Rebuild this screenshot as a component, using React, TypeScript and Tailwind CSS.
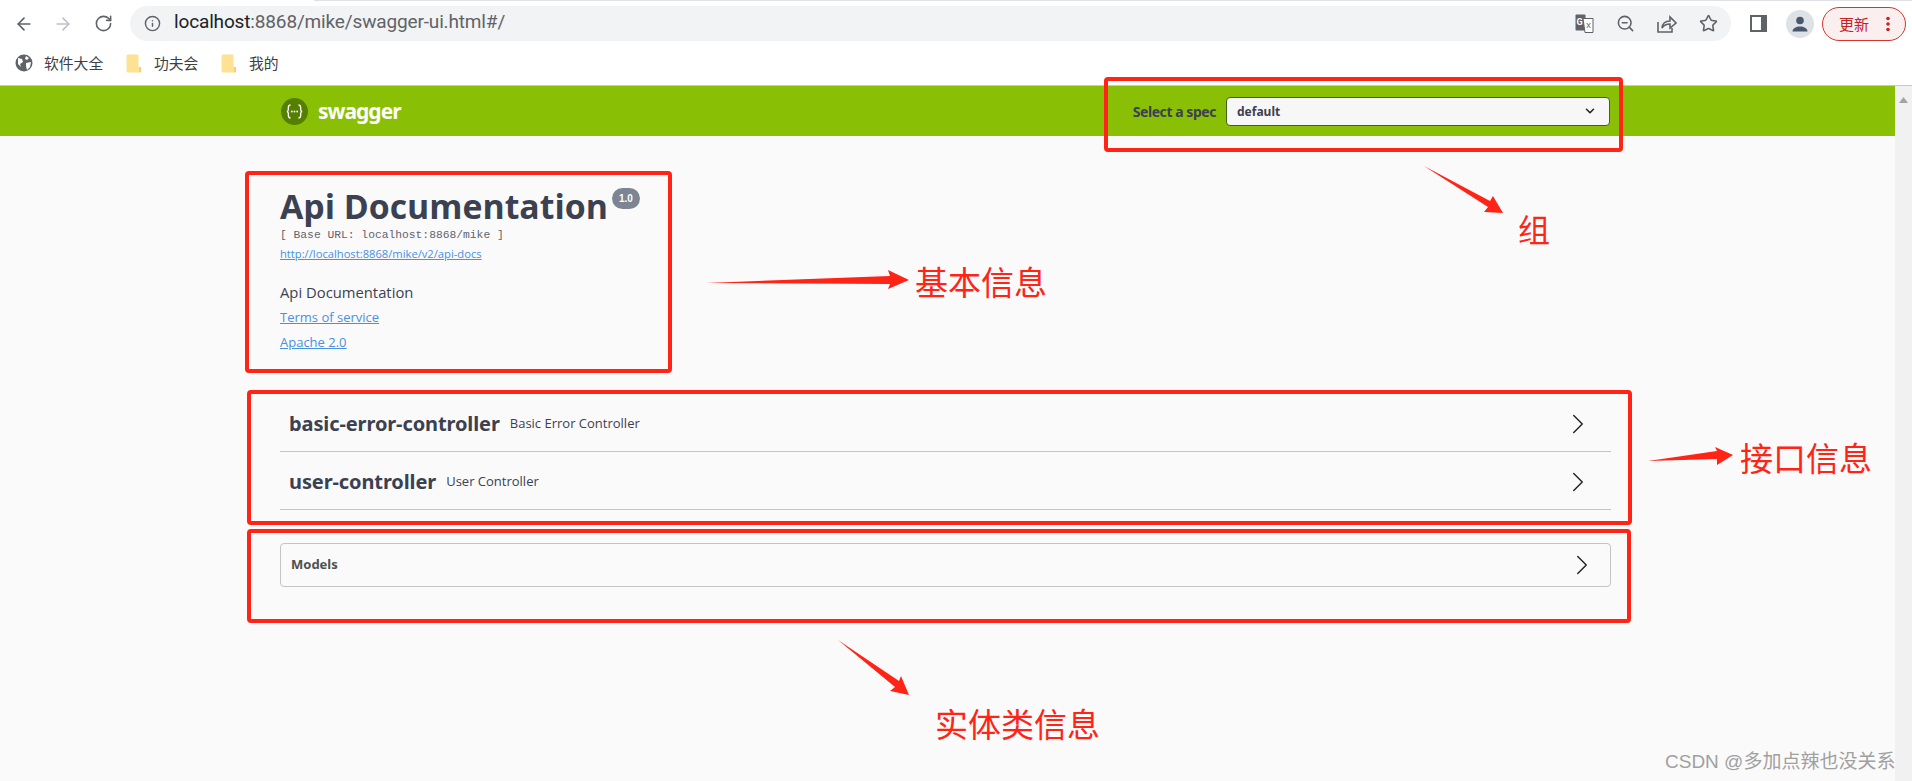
import React from "react";
import { ArrowLeft, ArrowRight, RotateCw, Info, ZoomOut, Star, ChevronRight, ChevronDown } from "lucide-react";

const cjk = "font-['Noto_Sans_CJK_SC','Noto_Sans',sans-serif]";
const open = "font-['Open_Sans',sans-serif]";

function Folder() {
  return (
    <svg width="16" height="19" viewBox="0 0 16 19" className="shrink-0">
      <path d="M2 0.5h9.5a1 1 0 0 1 1 1V18.5H2a1.5 1.5 0 0 1-1.5-1.5V2A1.5 1.5 0 0 1 2 .5z" fill="#fde293" />
      <path d="M12.5 13h2.5v4.5a1 1 0 0 1-1 1h-1.5z" fill="#f9d06c" />
    </svg>
  );
}

function Toolbar() {
  return (
    <div className="h-[42px] flex items-center pt-[5px] pl-[13px] pr-[6px]">
      <ArrowLeft size={20} strokeWidth={2} className="text-[#5f6368] ml-[1px]" />
      <ArrowRight size={20} strokeWidth={2} className="text-[#bdc1c6] ml-[19px]" />
      <RotateCw size={19} strokeWidth={2} className="text-[#5f6368] ml-[21px]" />
      <div className="ml-[17px] w-[1601px] h-[35px] rounded-full bg-[#f1f3f4] flex items-center pl-[14px] pr-[13px]">
        <Info size={17} strokeWidth={2} className="text-[#5f6368]" />
        <span className="ml-[13px] mt-[-2px] text-[19px] tracking-[-0.15px] font-['Roboto',sans-serif] text-[#5f6368] whitespace-nowrap">
          <span className="text-[#202124]">localhost</span>:8868/mike/swagger-ui.html#/
        </span>
        <div className="ml-auto flex items-center gap-[22px] text-[#5f6368]">
          <svg width="19" height="19" viewBox="0 0 19 19">
            <rect x="0.5" y="0.5" width="10" height="16" rx="1" fill="#5f6368" />
            <text x="1.6" y="11" fontSize="9" fontWeight="700" fill="#fff" fontFamily="Roboto">G</text>
            <path d="M8 4.5h10v14H10z" fill="#fff" stroke="#5f6368" strokeWidth="1" />
            <text x="11" y="14" fontSize="8" fill="#5f6368" fontFamily="Roboto">X</text>
          </svg>
          <ZoomOut size={19} strokeWidth={2} />
          <svg width="20" height="19" viewBox="0 0 20 19" fill="none" stroke="#5f6368" strokeWidth="1.6">
            <path d="M1 8v10h14v-4" />
            <path d="M5 14c.5-4.5 3.5-7 8-7V3l6 6-6 5v-4c-3.500 0-6 1-8 4z" />
          </svg>
          <Star size={19} strokeWidth={2} />
        </div>
      </div>
      <svg width="17" height="17" viewBox="0 0 17 17" className="ml-[19px]">
        <path d="M0 0h17v17H0z M2 2v13h9V2z" fill="#5f6368" fillRule="evenodd" />
      </svg>
      <div className="ml-[19px] w-[28px] h-[28px] rounded-full bg-[#dee1e6] flex flex-col items-center justify-center">
        <svg width="16" height="16" viewBox="0 0 16 16">
          <circle cx="8" cy="4.500" r="3.800" fill="#48566e" />
          <path d="M0.500 15.500c0-3.500 4-5 7.500-5s7.500 1.500 7.500 5z" fill="#48566e" />
        </svg>
      </div>
      <div className="ml-[8px] w-[84px] h-[34px] rounded-full border border-[#d0362e] bg-[#fbeeee] flex items-center pl-[16px]">
        <span className={`${cjk} text-[15px] leading-none text-[#c5221f]`}>更新</span>
        <svg width="4" height="16" viewBox="0 0 4 16" className="ml-[17px]">
          <circle cx="2" cy="2.500" r="1.800" fill="#c5221f" />
          <circle cx="2" cy="8" r="1.800" fill="#c5221f" />
          <circle cx="2" cy="13.500" r="1.800" fill="#c5221f" />
        </svg>
      </div>
    </div>
  );
}

function Bookmarks() {
  return (
    <div className={`h-[44px] flex items-center pl-[15px] pb-[1px] border-b border-[#c8c8c8] text-[14.800px] text-[#3c4043] ${cjk}`}>
      <svg width="18" height="18" viewBox="0 0 18 18">
        <circle cx="9" cy="9" r="8.500" fill="#5f6368" />
        <path d="M3 4l4 1 1 3-3 2 1 3-3-3zM11 2l3 2-2 2-2-1zM11 9l5-1-1 5-3 3-1-4z" fill="#fff" />
      </svg>
      <span className="ml-[11px] w-[60px] whitespace-nowrap">软件大全</span>
      <div className="ml-[22px]"><Folder /></div>
      <span className="ml-[12px] w-[45px] whitespace-nowrap">功夫会</span>
      <div className="ml-[22px]"><Folder /></div>
      <span className="ml-[12px]">我的</span>
    </div>
  );
}

function SwaggerBar() {
  return (
    <div className="h-[50px] bg-[#89bf04] flex items-center pl-[281px] pr-[285px]">
      <svg width="27" height="27" viewBox="0 0 27 27">
        <circle cx="13.500" cy="13.500" r="13.500" fill="#547f00" />
        <g fill="none" stroke="#fff" strokeWidth="1.300">
          <path d="M9.500 7c-2 0-2.200 1-2.200 3v1.500c0 1-.6 2-1.500 2 .9 0 1.500 1 1.500 2V17c0 2 .2 3 2.200 3" />
          <path d="M17.500 7c2 0 2.200 1 2.200 3v1.500c0 1 .6 2 1.500 2-.9 0-1.500 1-1.500 2V17c0 2-.2 3-2.200 3" />
        </g>
        <circle cx="10.800" cy="13.500" r="0.900" fill="#fff" />
        <circle cx="13.500" cy="13.500" r="0.900" fill="#fff" />
        <circle cx="16.200" cy="13.500" r="0.900" fill="#fff" />
      </svg>
      <span className="ml-[10px] text-[21px] leading-none font-bold tracking-[-1px] text-white font-['Noto_Sans',sans-serif]">swagger</span>
      <div className="ml-auto flex items-center">
        <span className="text-[14px] font-bold tracking-[-0.45px] text-[#3b4151] font-['Noto_Sans',sans-serif]">Select a spec</span>
        <div className="ml-[10px] w-[384px] h-[29px] rounded-[4px] border border-[#41640a] bg-[#f7f7f7] flex items-center justify-between pl-[10px] pr-[12px]">
          <span className="mt-[1px] text-[12px] font-bold text-[#3b4151] font-['Noto_Sans',sans-serif]">default</span>
          <ChevronDown size={14} strokeWidth={2.6} className="text-[#222]" />
        </div>
      </div>
    </div>
  );
}

function Info2() {
  return (
    <div className={`pt-[45px] ${open}`}>
      <div className="flex items-start">
        <h1 className="text-[33.800px] leading-[50px] font-bold text-[#3b4151] whitespace-nowrap">Api Documentation</h1>
        <span className="ml-[4px] mt-[7px] w-[28px] h-[21px] rounded-[11px] bg-[#7d8492] text-white text-[10px] font-bold flex items-center justify-center font-['Liberation_Sans',sans-serif]">1.0</span>
      </div>
      <p className="mt-[-3px] text-[11.300px] leading-[14px] font-['Liberation_Mono',monospace] text-[#5f6470] whitespace-pre">[ Base URL: localhost:8868/mike ]</p>
      <a className="block mt-[4px] text-[11.200px] leading-[16px] text-[#4990e2] underline">http://localhost:8868/mike/v2/api-docs</a>
      <p className="mt-[20px] text-[14.800px] leading-[20px] text-[#3b4151]">Api Documentation</p>
      <a className="block mt-[5px] text-[13px] leading-[20px] text-[#4990e2] underline">Terms of service</a>
      <a className="block mt-[5px] text-[13px] leading-[20px] text-[#4990e2] underline">Apache 2.0</a>
    </div>
  );
}

function Tag({ name, desc, h }: { name: string; desc: string; h: string }) {
  return (
    <div className={`${h} border-b border-[#c4c4c4] flex items-center pt-[3px] pl-[9px] pr-[16px]`}>
      <span className="text-[20px] font-bold tracking-[-0.1px] text-[#3b4151] font-['Noto_Sans',sans-serif]">{name}</span>
      <span className={`ml-[10px] text-[13px] text-[#3b4151] ${open}`}>{desc}</span>
      <ChevronRight size={34} strokeWidth={1} className="ml-auto text-[#222]" />
    </div>
  );
}

function Annotations() {
  const boxes = [
    "left-[1104px] top-[77px] w-[519px] h-[75px]",
    "left-[245px] top-[171px] w-[427px] h-[202px]",
    "left-[247px] top-[390px] w-[1385px] h-[135px]",
    "left-[247px] top-[529px] w-[1384px] h-[94px]",
  ];
  return (
    <>
      {boxes.map((b) => (
        <div key={b} className={`absolute ${b} border-[4px] border-[#ff2416] rounded-[4px]`} />
      ))}
      <svg className="absolute left-0 top-0" width="1912" height="781" viewBox="0 0 1912 781" fill="#ff2416">
        <polygon points="1424,166 1490,201 1493,196 1503,213 1484,212 1488,207" />
        <polygon points="706,283 890,276 888,270 909,280 888,289 890,284" />
        <polygon points="1648,461 1717,451 1715,447 1733,455 1717,465 1717,459" />
        <polygon points="838,640 899,681 901,676 909,695 890,691 895,687" />
      </svg>
      <div className={`absolute left-[1518px] top-[205px] text-[32px] leading-[46px] text-[#ff2416] ${cjk}`}>组</div>
      <div className={`absolute left-[915px] top-[258px] text-[33px] leading-[46px] text-[#ff2416] whitespace-nowrap ${cjk}`}>基本信息</div>
      <div className={`absolute left-[1740px] top-[434px] text-[33px] leading-[46px] text-[#ff2416] whitespace-nowrap ${cjk}`}>接口信息</div>
      <div className={`absolute left-[935px] top-[700px] text-[33px] leading-[46px] text-[#ff2416] whitespace-nowrap ${cjk}`}>实体类信息</div>
      <div className="absolute left-[1665px] top-[750px] text-[19px] leading-[24px] text-[#a0a0a0] whitespace-nowrap font-['Liberation_Sans','Noto_Sans_CJK_SC',sans-serif]">CSDN @多加点辣也没关系</div>
    </>
  );
}

export default function App() {
  return (
    <div className="relative w-[1912px] h-[781px] overflow-hidden bg-white flex flex-col">
      <div className="absolute left-[314px] top-0 right-0 h-px bg-[#dee1e6]" />
      <Toolbar />
      <Bookmarks />
      <div className="flex-1 flex min-h-0">
        <div className="flex-1 bg-[#fafafa] min-w-0">
          <SwaggerBar />
          <div className="ml-[280px] w-[1331px]">
            <Info2 />
            <div className="mt-[41px]">
              <Tag name="basic-error-controller" desc="Basic Error Controller" h="h-[59px]" />
              <Tag name="user-controller" desc="User Controller" h="h-[58px]" />
            </div>
            <div className="mt-[33px] h-[44px] rounded-[4px] border border-[#c4c4c4] flex items-center pl-[10px] pr-[11px]">
              <span className="text-[13px] font-bold text-[#505050] font-['Noto_Sans',sans-serif]">Models</span>
              <ChevronRight size={34} strokeWidth={1} className="ml-auto text-[#222]" />
            </div>
          </div>
        </div>
        <div className="w-[17px] bg-[#f1f1f1] flex flex-col items-center pt-[11px]">
          <svg width="9" height="6" viewBox="0 0 9 6"><path d="M4.500 0L9 6H0z" fill="#a3a3a3" /></svg>
        </div>
      </div>
      <Annotations />
    </div>
  );
}
